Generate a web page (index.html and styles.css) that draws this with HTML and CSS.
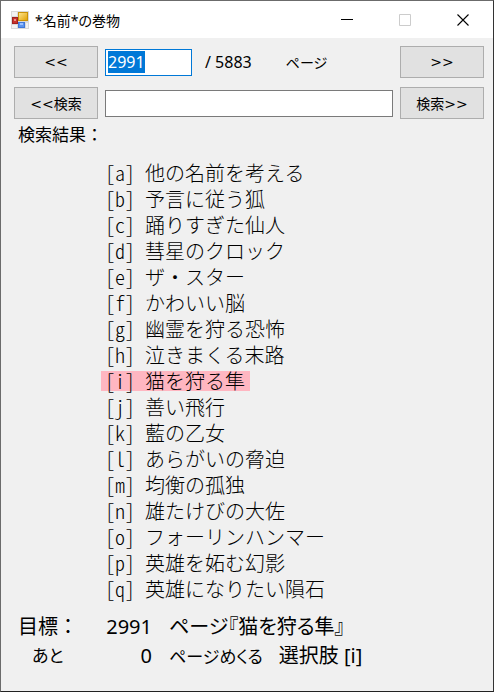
FILE: index.html
```html
<!DOCTYPE html>
<html lang="ja">
<head>
  <meta charset="utf-8">
  <meta name="viewport" content="width=device-width, initial-scale=1">
  <title>*名前*の巻物</title>
  <link rel="stylesheet" href="styles.css">
</head>
<body>
  <div class="window">
    <header class="titlebar">
      <svg class="app-icon" width="18" height="18" viewBox="0 0 18 18" aria-hidden="true">
        <defs>
          <linearGradient id="gold" x1="0" y1="0" x2="1" y2="1">
            <stop offset="0" stop-color="#ffe795"/>
            <stop offset="1" stop-color="#e0a000"/>
          </linearGradient>
        </defs>
        <rect width="18" height="18" fill="#d9d9d9"/>
        <path d="M1 1h5v4H1zM1 14h5v3H1zM15 12h2v5h-2z" fill="#f2f2f2"/>
        <rect x="7.5" y="1.5" width="9" height="8" fill="url(#gold)" stroke="#c99208"/>
        <rect x="1.5" y="6.5" width="5" height="6" fill="#c8322a" stroke="#a02020"/>
        <rect x="3" y="8" width="2" height="2" fill="#ec9088"/>
        <rect x="7.5" y="11.5" width="6" height="5" fill="#5b93ee" stroke="#3f78d8"/>
        <rect x="9" y="12" width="3" height="2" fill="#9cc2ff"/>
      </svg>
      <h1 class="title">*名前*の巻物</h1>
      <div class="window-buttons">
        <button type="button" aria-label="最小化">
          <svg width="12" height="12" viewBox="0 0 12 12"><path d="M0 5.5h12" stroke="#000"/></svg>
        </button>
        <button type="button" aria-label="最大化" disabled>
          <svg width="12" height="12" viewBox="0 0 12 12"><path d="M.5.5h11v11H.5z" fill="none" stroke="#ccc"/></svg>
        </button>
        <button type="button" aria-label="閉じる">
          <svg width="12" height="12" viewBox="0 0 12 12"><path d="M.5.5l11 11M11.5.5l-11 11" stroke="#000" stroke-width="1.1"/></svg>
        </button>
      </div>
    </header>

    <main>
      <form class="controls" id="pageForm">
        <button class="button" type="button" id="prevPage">&lt;&lt;</button>
        <div class="pager">
          <input class="textbox page-input" type="text" id="page" value="2991" aria-label="ページ番号">
          <span class="total">/ 5883</span>
          <label for="page">ページ</label>
        </div>
        <button class="button" type="button" id="nextPage">&gt;&gt;</button>

        <button class="button" type="button" id="searchPrev">&lt;&lt;検索</button>
        <input class="textbox" type="text" id="search" aria-label="検索">
        <button class="button" type="button" id="searchNext">検索&gt;&gt;</button>
      </form>

      <p class="search-result">検索結果：</p>

      <ul class="names">
        <li><span class="key">[a]</span>他の名前を考える</li>
        <li><span class="key">[b]</span>予言に従う狐</li>
        <li><span class="key">[c]</span>踊りすぎた仙人</li>
        <li><span class="key">[d]</span>彗星のクロック</li>
        <li><span class="key">[e]</span>ザ・スター</li>
        <li><span class="key">[f]</span>かわいい脳</li>
        <li><span class="key">[g]</span>幽霊を狩る恐怖</li>
        <li><span class="key">[h]</span>泣きまくる末路</li>
        <li class="target"><span class="key">[i]</span>猫を狩る隼</li>
        <li><span class="key">[j]</span>善い飛行</li>
        <li><span class="key">[k]</span>藍の乙女</li>
        <li><span class="key">[l]</span>あらがいの脅迫</li>
        <li><span class="key">[m]</span>均衡の孤独</li>
        <li><span class="key">[n]</span>雄たけびの大佐</li>
        <li><span class="key">[o]</span>フォーリンハンマー</li>
        <li><span class="key">[p]</span>英雄を妬む幻影</li>
        <li><span class="key">[q]</span>英雄になりたい隕石</li>
      </ul>

      <div class="summary">
        <span class="goal">目標：</span>
        <span class="number">2991</span>
        <span>ページ『猫を狩る隼』</span>
        <span class="rest kana">あと</span>
        <span class="number">0</span>
        <span><span class="kana">ページめくる</span><span class="choice">選択肢 [i]</span></span>
      </div>
    </main>
  </div>

  <script>
    // Start with the page number selected
    const page = document.getElementById('page');
    page.focus();
    page.select();
  </script>
</body>
</html>
```
FILE: styles.css
```css
* {
  box-sizing: border-box;
}

body {
  margin: 0;
  color: #000;
  font-family: "Noto Sans", "Noto Sans CJK JP", sans-serif;
  font-size: 16px;
  font-feature-settings: "palt";
}

.window {
  min-height: 100vh;
  border: 1px solid #6b6b6b;
  border-right-color: #333;
  border-bottom-color: #222;
  background-color: #f0f0f0;
}

.titlebar {
  display: flex;
  align-items: center;
  height: 37px;
  padding-left: 10px;
  background-color: #fff;
}

.title {
  flex: 1;
  margin: 0 0 0 6px;
  font-size: 14px;
  font-weight: normal;
}

.window-buttons {
  display: flex;
  margin-right: 1px;
}

.window-buttons button {
  display: flex;
  align-items: center;
  justify-content: center;
  width: 58px;
  height: 37px;
  padding: 0;
  border: none;
  background: none;
}

.controls {
  display: grid;
  grid-template-columns: 84px 1fr 84px;
  align-items: center;
  gap: 9px 7px;
  padding: 8px 9px 0 13px;
}

.button {
  height: 32px;
  padding: 0;
  border: 1px solid #adadad;
  background-color: #e1e1e1;
  color: #000;
  font-family: "DejaVu Sans", "Noto Sans CJK JP", sans-serif;
  font-size: 14px;
}

.pager {
  display: flex;
  align-items: center;
}

.pager label {
  font-size: 14px;
}

.textbox {
  width: 100%;
  height: 27px;
  padding: 0 2px;
  border: 1px solid #7a7a7a;
  border-radius: 0;
  outline: none;
  background-color: #fff;
  font: inherit;
  line-height: 19px;
}

.textbox::selection {
  background-color: #0078d7;
  color: #fff;
}

.page-input {
  width: 87px;
  border-color: #0078d7;
}

.total {
  margin: 0 34px 0 13px;
}

.search-result {
  margin: 4px 17px 0;
  font-size: 17px;
  font-feature-settings: normal;
  line-height: 24px;
}

.names {
  display: flex;
  flex-direction: column;
  align-items: flex-start;
  gap: 6px;
  margin: 16px 0 0 100px;
  padding: 0;
  list-style: none;
  font-family: "Noto Sans CJK JP", sans-serif;
  font-size: 20px;
  font-weight: 300;
  font-feature-settings: normal;
  line-height: 20px;
}

.names li {
  display: flex;
  padding: 0 5px 0 4px;
}

.key {
  width: 40px;
  font-feature-settings: "hwid";
}

.target {
  background-color: #ffb6c1;
}

.summary {
  display: grid;
  grid-template-columns: 70px 64px 1fr;
  margin: 13px 0 20px 17px;
  font-size: 20px;
  line-height: 29px;
}

.goal {
  font-feature-settings: normal;
}

.kana {
  font-size: 17px;
}

.rest {
  padding-left: 14px;
}

.number {
  text-align: right;
}

.number + span {
  padding-left: 17px;
}

.choice {
  margin-left: 16px;
}
```
